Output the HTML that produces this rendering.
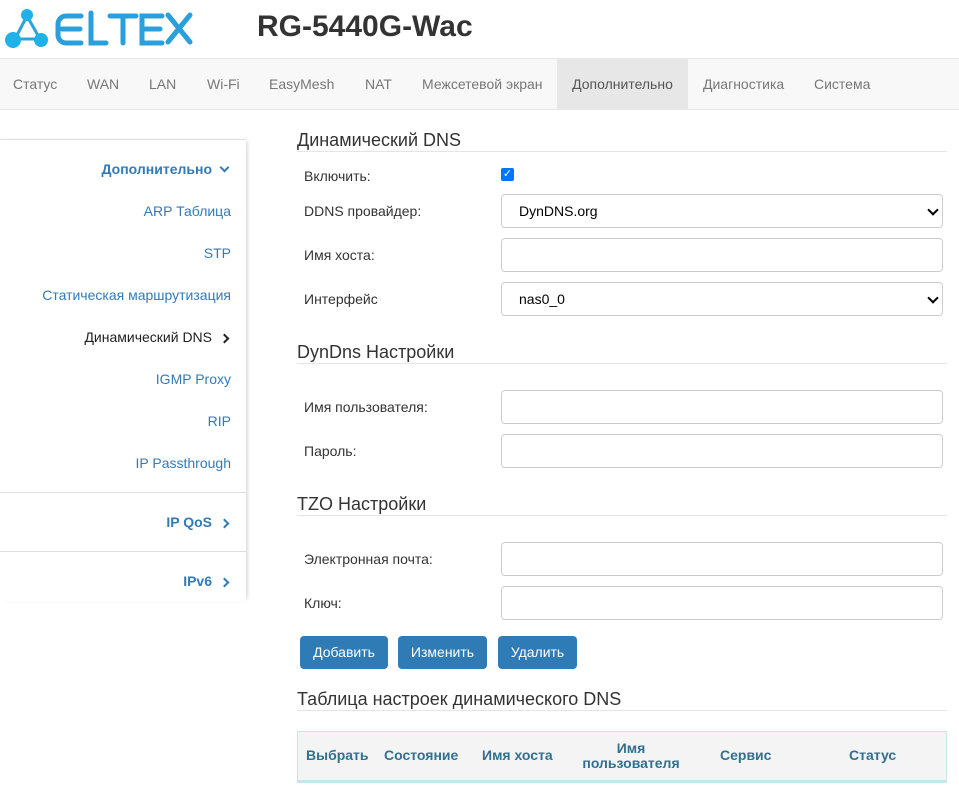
<!DOCTYPE html>
<html><head><meta charset="utf-8"><style>
*{box-sizing:border-box}
body{margin:0;width:959px;height:796px;overflow:hidden;font-family:"Liberation Sans",sans-serif;font-size:14px;color:#333;background:#fff;position:relative}
.abs{position:absolute}
.title{left:257px;top:10px;font-size:30px;font-weight:bold;color:#333}
.nav{left:0;top:58px;width:959px;height:52px;background:#f8f8f8;border-top:1px solid #e7e7e7;border-bottom:1px solid #e7e7e7}
.nav span{position:absolute;top:17px;color:#777;font-size:14px}
.nav .act{background:#e7e7e7;top:0;height:50px;padding-top:17px;left:557px;width:131px;text-align:center;color:#555}
.side{left:0;top:139px;width:246px;height:462px;border-top:1px solid #ddd;box-shadow:3px 0 4px -2px rgba(0,0,0,.2)}
.si{position:absolute;right:15px;color:#337ab7;font-size:14px;text-align:right}
.si.c{right:18px}
.chev{display:inline-block;width:7px;height:7px;border-right:2px solid currentColor;border-bottom:2px solid currentColor;margin-left:9px}
.hr{position:absolute;left:0;width:246px;border-top:1px solid #ddd}
h4{position:absolute;left:297px;width:650px;margin:0;font-size:18px;font-weight:normal;color:#333;border-bottom:1px solid #e5e5e5;padding-bottom:0}
.lbl{position:absolute;left:304px;font-size:14px}
.inp{position:absolute;left:501px;width:442px;height:34px;border:1px solid #ccc;border-radius:4px;background:#fff;padding:8px 17px;font-size:14px;color:#000}
.sel::after{content:"";position:absolute;right:5px;top:11px;width:6px;height:6px;border-right:2px solid #000;border-bottom:2px solid #000;transform:rotate(45deg)}
.btn{position:absolute;top:636px;height:33px;background:#2e7bb6;color:#fff;border-radius:4px;font-size:14px;text-align:center;padding-top:8px}
.th{position:absolute;color:#31708f;font-weight:bold;font-size:14px;text-align:center;line-height:15px}
</style></head><body>
<svg class="abs" style="left:4px;top:8px" width="192" height="42" viewBox="0 0 192 42">
<g stroke="#2aa3dd" stroke-width="3" fill="none"><line x1="23" y1="8" x2="11" y2="31"/><line x1="23" y1="8" x2="36" y2="31"/><line x1="11" y1="31" x2="36" y2="31"/></g>
<circle cx="23" cy="7" r="6" fill="#1fb2e8"/><circle cx="9" cy="32" r="8" fill="#1fb2e8"/><circle cx="37" cy="32" r="7" fill="#1fb2e8"/>
<g stroke="#2a9fdb" stroke-width="5" fill="none" stroke-linecap="round">
<path d="M77 8H62a8 8 0 0 0 -8 8v11a8 8 0 0 0 8 8h15M58 21h18" /><path d="M87 5v30h15"/><path d="M106 8h26M119 8v27"/><path d="M158 8h-20v27h20M140 21h16"/><path d="M164 7l22 27M186 7l-22 27"/></g>
</svg>
<div class="abs title">RG-5440G-Wac</div>
<div class="abs nav">
<span style="left:13px">Статус</span><span style="left:87px">WAN</span><span style="left:149px">LAN</span><span style="left:207px">Wi-Fi</span><span style="left:269px">EasyMesh</span><span style="left:365px">NAT</span><span style="left:422px">Межсетевой экран</span><span class="act">Дополнительно</span><span style="left:703px">Диагностика</span><span style="left:814px">Система</span>
</div>
<div class="abs side">
<div class="si c" style="top:21px;font-weight:bold">Дополнительно<span class="chev" style="transform:rotate(45deg);position:relative;top:-3px"></span></div>
<div class="si" style="top:63px">ARP Таблица</div>
<div class="si" style="top:105px">STP</div>
<div class="si" style="top:147px">Статическая маршрутизация</div>
<div class="si c" style="top:189px;color:#222">Динамический DNS<span class="chev" style="transform:rotate(-45deg);color:#222"></span></div>
<div class="si" style="top:231px">IGMP Proxy</div>
<div class="si" style="top:273px">RIP</div>
<div class="si" style="top:315px">IP Passthrough</div>
<div class="hr" style="top:352px"></div>
<div class="si c" style="top:374px;font-weight:bold">IP QoS<span class="chev" style="transform:rotate(-45deg)"></span></div>
<div class="hr" style="top:411px"></div>
<div class="si c" style="top:433px;font-weight:bold">IPv6<span class="chev" style="transform:rotate(-45deg)"></span></div>
</div>
<h4 style="top:130px">Динамический DNS</h4>
<div class="lbl" style="top:168px">Включить:</div>
<div class="abs" style="left:501px;top:168px;width:13px;height:13px;background:#0075ff;border-radius:2px;color:#fff;font-size:11px;line-height:13px;text-align:center">✓</div>
<div class="lbl" style="top:203px">DDNS провайдер:</div>
<div class="inp sel" style="top:194px">DynDNS.org</div>
<div class="lbl" style="top:247px">Имя хоста:</div>
<div class="inp" style="top:238px"></div>
<div class="lbl" style="top:291px">Интерфейс</div>
<div class="inp sel" style="top:282px">nas0_0</div>
<h4 style="top:342px">DynDns Настройки</h4>
<div class="lbl" style="top:399px">Имя пользователя:</div>
<div class="inp" style="top:390px"></div>
<div class="lbl" style="top:443px">Пароль:</div>
<div class="inp" style="top:434px"></div>
<h4 style="top:494px">TZO Настройки</h4>
<div class="lbl" style="top:551px">Электронная почта:</div>
<div class="inp" style="top:542px"></div>
<div class="lbl" style="top:595px">Ключ:</div>
<div class="inp" style="top:586px"></div>
<div class="btn" style="left:300px;width:88px">Добавить</div>
<div class="btn" style="left:398px;width:89px">Изменить</div>
<div class="btn" style="left:498px;width:79px">Удалить</div>
<h4 style="top:689px">Таблица настроек динамического DNS</h4>
<div class="abs" style="left:297px;top:731px;width:650px;height:52px;background:#f4f4f4;border:1px solid #c7e6ee;border-bottom:3px solid #c7e6ee"></div>
<div class="th" style="left:306px;top:748px">Выбрать</div>
<div class="th" style="left:384px;top:748px">Состояние</div>
<div class="th" style="left:482px;top:748px">Имя хоста</div>
<div class="th" style="left:576px;top:741px;width:110px">Имя<br>пользователя</div>
<div class="th" style="left:720px;top:748px">Сервис</div>
<div class="th" style="left:849px;top:748px">Статус</div>
</body></html>
